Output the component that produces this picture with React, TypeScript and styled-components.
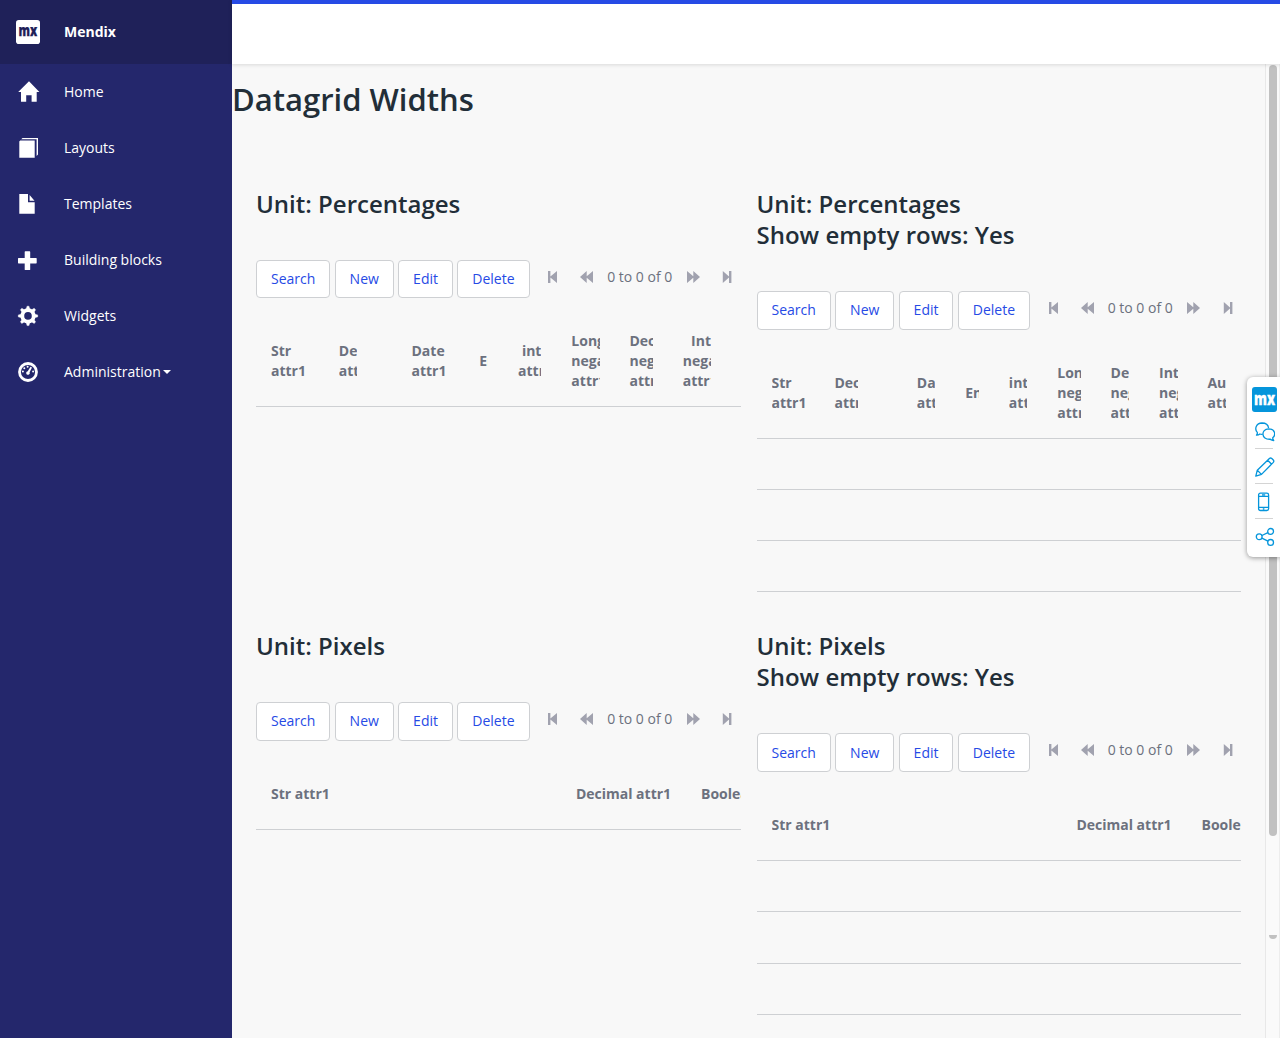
import React from "react";
import styled, { createGlobalStyle } from "styled-components";

const Global = createGlobalStyle`
  *, *::before, *::after { box-sizing: border-box; }
  body {
    margin: 0;
    background: #f8f8f8;
    color: #6c717e;
    font-family: "Open Sans", "Noto Sans", sans-serif;
    font-size: 14px;
    line-height: 20px;
    -webkit-font-smoothing: antialiased;
  }
`;

const Shell = styled.div`
  display: flex;
  height: 1038px;
  overflow: hidden;
  position: relative;
`;

const Sidebar = styled.aside`
  width: 232px;
  flex: none;
  background: #24276c;
  color: #fff;
`;

const Brand = styled.div`
  display: flex;
  align-items: center;
  height: 64px;
  padding-left: 16px;
  gap: 24px;
  background: #1f2159;
  font-weight: 700;
`;

const NavItem = styled.a`
  display: flex;
  align-items: center;
  height: 56px;
  padding-left: 16px;
  color: #fff;
  text-decoration: none;
`;

const NavIcon = styled.svg`
  width: 24px;
  height: 24px;
  margin-right: 24px;
  fill: #fff;
`;

const Caret = styled.span`
  margin-left: 2px;
  border: 4px solid transparent;
  border-top-color: #fff;
  border-bottom: 0;
`;

const Main = styled.main`
  flex: 1;
  min-width: 0;
  display: flex;
  flex-direction: column;
`;

const Topbar = styled.header`
  flex: none;
  height: 64px;
  border-top: 4px solid #264ae5;
  background: #fff;
  box-shadow: 0 1px 4px rgba(0, 0, 0, 0.13);
  z-index: 1;
`;

const Body = styled.div`
  flex: 1;
  display: flex;
  min-height: 0;
`;

const Content = styled.div`
  flex: 1;
  min-width: 0;
  padding-top: 15px;
`;

const Title = styled.h1`
  margin: 0;
  color: #222e38;
  font-size: 31px;
  font-weight: 600;
  line-height: 41.6px;
`;

const Grids = styled.div`
  display: grid;
  grid-template-columns: 1fr 1fr;
  grid-auto-rows: 442.2px;
  column-gap: 16px;
  padding: 67px 24px 0;
`;

const Panel = styled.section`
  min-width: 0;
`;

const Heading = styled.h2`
  margin: 0 0 41.1px;
  color: #222e38;
  font-size: 24px;
  font-weight: 600;
  line-height: 31.2px;
`;

const Toolbar = styled.div`
  display: flex;
  height: 38.4px;
  margin-bottom: 17.6px;
`;

const Button = styled.button`
  margin: 0 4.25px 0 0;
  padding: 0 14px;
  height: 38.5px;
  border: 1px solid #ced0d3;
  border-radius: 4px;
  background: #fff;
  color: #264ae5;
  font: inherit;
`;

const Paging = styled.div`
  display: flex;
  align-items: center;
  height: 34px;
  margin-left: 14.4px;
  white-space: nowrap;
`;

const PageIcon = styled.svg<{ $left?: number; $right?: number }>`
  width: 14px;
  height: 14px;
  margin-left: ${(p) => p.$left ?? 0}px;
  margin-right: ${(p) => p.$right ?? 0}px;
  fill: #a1a2af;
`;

const Table = styled.div`
  overflow: hidden;
`;

const HeadRow = styled.div<{ $columns: string; $height: number }>`
  display: grid;
  grid-template-columns: ${(p) => p.$columns};
  align-items: center;
  height: ${(p) => p.$height}px;
  border-bottom: 1px solid #ced0d3;
`;

const HeadCell = styled.div<{ $right?: boolean; $nowrap?: boolean }>`
  min-width: 0;
  padding: 0.4px 14.9px 0 15px;
  color: #6c717e;
  font-weight: 700;
  text-align: ${(p) => (p.$right ? "right" : "left")};
  white-space: ${(p) => (p.$nowrap ? "nowrap" : "normal")};
`;

const Caption = styled.div`
  overflow: hidden;
`;

const EmptyRow = styled.div`
  height: 51.2px;
  border-bottom: 1px solid #ced0d3;
`;

const ScrollTrack = styled.div`
  width: 15px;
  flex: none;
  display: flex;
  flex-direction: column;
  align-items: center;
  border-left: 1px solid #e8e8e8;
  border-right: 1px solid #ededed;
  background: #fafafa;
  padding-top: 1px;
`;

const Thumb = styled.div`
  width: 8px;
  height: 771px;
  border-radius: 4px;
  background: #c1c1c1;
`;

const ThumbEnd = styled.div`
  width: 8px;
  height: 4px;
  margin-top: 99px;
  border-radius: 0 0 4px 4px;
  background: #c1c1c1;
`;

const Feedback = styled.div`
  position: absolute;
  top: 377px;
  right: 0;
  z-index: 2;
  width: 33px;
  height: 180px;
  padding: 10px 0 0 5px;
  border-radius: 6px 0 0 6px;
  background: #fff;
  box-shadow: 0 1px 5px rgba(0, 0, 0, 0.4);
`;

const ToolList = styled.div`
  padding-top: 1px;
`;

const Tool = styled.div<{ $last?: boolean }>`
  display: flex;
  align-items: center;
  justify-content: center;
  width: 20px;
  height: 35px;
  margin-left: 3px;
  padding-top: 2px;
  position: relative;
  svg { flex: none; }
  &::after {
    content: "";
    position: absolute;
    left: 0;
    bottom: -1px;
    width: 18px;
    height: ${(p) => (p.$last ? 0 : 1)}px;
    background: #d4d4d4;
  }
`;

const LogoSvg = styled.svg`
  display: block;
  flex: none;
`;

type LogoProps = { size: number; box: string; ink: string; baseline: number; inset: number };

const Logo = ({ size, box, ink, baseline, inset }: LogoProps) => (
  <LogoSvg width={size} height={size} viewBox="0 0 24 24">
    <rect width="24" height="24" rx="2.8" fill={box} />
    <text
      x={inset}
      y={baseline}
      fill={ink}
      stroke={ink}
      strokeWidth="0.25"
      fontSize="16.5"
      fontWeight="800"
      textLength={24 - 2 * inset}
      lengthAdjust="spacingAndGlyphs"
    >
      mx
    </text>
  </LogoSvg>
);

const icons: Record<string, React.ReactNode> = {
  Home: <path d="M13 1.3 23.4 12H20.7V21.8H15.6V15.3H10.2V21.8H5V12H2.2Z" />,
  Layouts: (
    <>
      <path d="M3.3 5.4 4.2 4.4H18.7V21.8H3.3Z" />
      <path d="M5.2 3.2 6.5 2H22V18.6L20.6 20V3.3Z" />
    </>
  ),
  Templates: <path d="M3.3 2H12V10.2H18.7V21.8H3.3ZM13.6 3 18.5 8.7H13.6Z" />,
  "Building blocks": (
    <path d="M9.3 3.3h4.3q.6 0 .6.6V10h5.9q.6 0 .6.6v4.2q0 .6-.6.6h-5.9v6q0 .6-.6.6H9.3q-.6 0-.6-.6v-6H2.6q-.6 0-.6-.6v-4.2q0-.6.6-.6h6.1V3.9q0-.6.6-.6Z" />
  ),
  Widgets: (
    <g stroke="#fff">
      <circle cx="12" cy="11.9" r="5.7" fill="none" strokeWidth="3.8" />
      {[0, 45, 90, 135, 180, 225, 270, 315].map((a) => (
        <path key={a} d="M10.3 5 11 2.2H13L13.7 5Z" strokeWidth=".4" transform={`rotate(${a} 12 11.9)`} />
      ))}
    </g>
  ),
  Administration: (
    <>
      <circle cx="12" cy="12" r="8.5" fill="none" stroke="#fff" strokeWidth="2.8" />
      <circle cx="6.9" cy="11.5" r="1" />
      <circle cx="8.3" cy="8.2" r="1" />
      <circle cx="11.6" cy="6.8" r="1" />
      <circle cx="17.1" cy="11.5" r="1" />
      <path d="M14.5 6.8 16 7.5 13.6 12.2A1.8 1.8 0 1 1 11.7 11.2Z" />
    </>
  ),
};

const navigation = ["Home", "Layouts", "Templates", "Building blocks", "Widgets", "Administration"];

type Column = { label: string; width: string; right?: boolean };

const col = (label: string, width: string, right = false): Column => ({ label, width, right });

const percentColumns: Column[] = [
  col("Str attr1", "14%"),
  col("Decimal attr1", "10%", true),
  col("", "5%"),
  col("Date attr1", "14%"),
  col("Enum", "8%"),
  col("int attr1", "11%", true),
  col("Long negative attr1", "12%", true),
  col("Decimal negative attr1", "11%", true),
  col("Int negative attr1", "12%", true),
  col("", "3%"),
];

const percentColumnsWithRows: Column[] = [
  col("Str attr1", "13%"),
  col("Decimal attr1", "11%", true),
  col("", "6%"),
  col("Date attr1", "10%"),
  col("Enum", "9%"),
  col("int attr1", "10%", true),
  col("Long negative attr1", "11%", true),
  col("Decimal negative attr1", "10%", true),
  col("Int negative attr1", "10%", true),
  col("Autonumber attr1", "10%", true),
];

const pixelColumns: Column[] = [
  col("Str attr1", "200px"),
  col("Decimal attr1", "230px", true),
  col("Boolean attr1", "150px"),
];

type GridProps = { unit: string; columns: Column[]; headHeight: number; rows?: boolean };

function DataGrid({ unit, columns, headHeight, rows }: GridProps) {
  const fixed = unit === "Pixels";
  return (
    <Panel>
      <Heading>
        Unit: {unit}
        {rows && (
          <>
            <br />
            Show empty rows: Yes
          </>
        )}
      </Heading>
      <Toolbar>
        {["Search", "New", "Edit", "Delete"].map((name) => (
          <Button key={name}>{name}</Button>
        ))}
        <Paging>
          <PageIcon $right={18} viewBox="0 0 14 14">
            <path d="M0 1H2.4V6.6L9 1V13L2.4 7.4V13H0Z" />
          </PageIcon>
          <PageIcon $right={13} viewBox="0 0 14 14">
            <path d="M0 7 6.7 1V6.3L13 1V13L6.7 7.7V13Z" />
          </PageIcon>
          <span>0 to 0 of 0</span>
          <PageIcon $left={14.6} $right={21.2} viewBox="0 0 14 14">
            <path d="M13 7 6.3 1V6.3L0 1V13L6.3 7.7V13Z" />
          </PageIcon>
          <PageIcon viewBox="0 0 14 14">
            <path d="M9.4 1H7V6.6L.8 1V13L7 7.4V13H9.4Z" />
          </PageIcon>
        </Paging>
      </Toolbar>
      <Table>
        <HeadRow $columns={columns.map((c) => c.width).join(" ")} $height={headHeight}>
          {columns.map((c, i) => (
            <HeadCell key={i} $right={c.right} $nowrap={fixed}>
              <Caption>{c.label}</Caption>
            </HeadCell>
          ))}
        </HeadRow>
        {rows && [0, 1, 2].map((r) => <EmptyRow key={r} />)}
      </Table>
    </Panel>
  );
}

const toolStroke = { fill: "none", stroke: "#0595db", strokeWidth: 1.3, strokeLinejoin: "round" as const };

export default function App() {
  return (
    <>
      <Global />
      <Shell>
        <Sidebar>
          <Brand>
            <Logo size={24} box="#fff" ink="#1f2159" baseline={16.2} inset={2.6} />
            Mendix
          </Brand>
          {navigation.map((name) => (
            <NavItem key={name}>
              <NavIcon viewBox="0 0 24 24">{icons[name]}</NavIcon>
              {name}
              {name === "Administration" && <Caret />}
            </NavItem>
          ))}
        </Sidebar>
        <Main>
          <Topbar />
          <Body>
            <Content>
              <Title>Datagrid Widths</Title>
              <Grids>
                <DataGrid unit="Percentages" columns={percentColumns} headHeight={91.5} />
                <DataGrid unit="Percentages" columns={percentColumnsWithRows} headHeight={91.5} rows />
                <DataGrid unit="Pixels" columns={pixelColumns} headHeight={71.9} />
                <DataGrid unit="Pixels" columns={pixelColumns} headHeight={71.9} rows />
              </Grids>
            </Content>
            <ScrollTrack>
              <Thumb />
              <ThumbEnd />
            </ScrollTrack>
          </Body>
        </Main>
        <Feedback>
          <Logo size={25} box="#0595db" ink="#fff" baseline={16.9} inset={1.9} />
          <ToolList>
            <Tool>
              <svg width="20" height="20" viewBox="0 0 20 20" {...toolStroke}>
                <path d="M7.6 12.3Q6 12.4 4.9 12 3.4 13.3 1.5 13.2 2.5 12 2.4 10.6C-.8 7.2 1 1.2 7 1c4 0 6.2 2.3 6.6 5" />
                <path d="M13.5 6.8c7 0 7.4 6.6 4.2 8.9q0 1.7 1 2.8-2.1 0-3.3-1.3C5.6 18 6 7 13.5 6.8Z" />
              </svg>
            </Tool>
            <Tool>
              <svg width="20" height="20" viewBox="0 0 20 20" {...toolStroke}>
                <path d="M.8 19.2 2.3 13.2 14.4 1.5Q15.6.5 16.8 1.5L18.3 3Q19.3 4.2 18.3 5.4L6.5 17.4ZM2.3 13.2 6.5 17.4M12.6 3.2 16.7 7.2" />
              </svg>
            </Tool>
            <Tool>
              <svg width="20" height="20" viewBox="0 0 20 20" {...toolStroke}>
                <rect x="3.6" y="1.2" width="10" height="17.3" rx="1.8" />
                <path d="M3.6 4.3H13.6M3.6 15.3H13.6M7 2.8H10.2M7.8 17H9.4" />
              </svg>
            </Tool>
            <Tool $last>
              <svg width="20" height="20" viewBox="0 0 20 20" {...toolStroke}>
                <circle cx="4.2" cy="9.8" r="2.9" />
                <circle cx="15.6" cy="4.4" r="2.9" />
                <circle cx="15.6" cy="15.4" r="2.9" />
                <path d="M6.9 8.5 12.9 5.7M6.9 11.1 12.9 14.1" />
              </svg>
            </Tool>
          </ToolList>
        </Feedback>
      </Shell>
    </>
  );
}
